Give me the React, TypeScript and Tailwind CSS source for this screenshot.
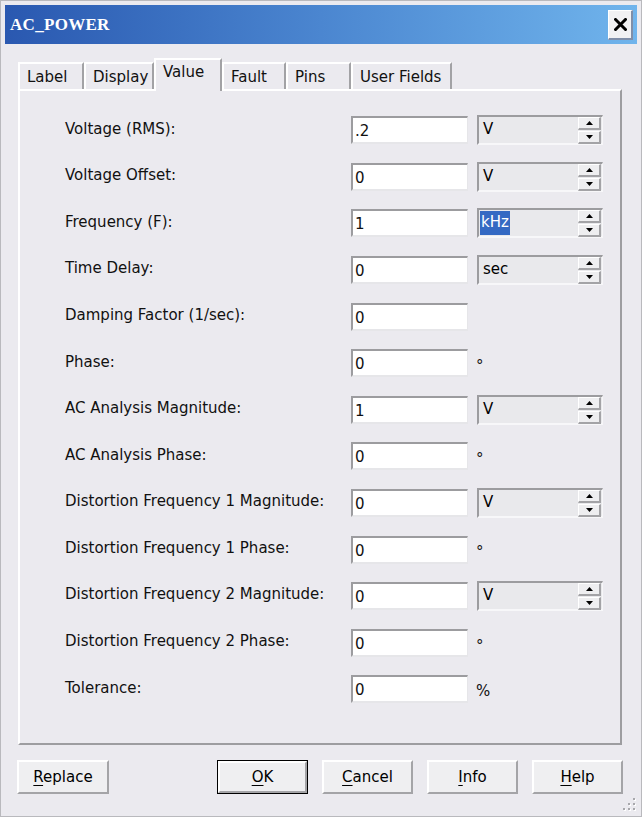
import React from 'react';

type Row = {
  label: string;
  value: string;
  unit?: string;
  selected?: boolean;
  suffix?: string;
};

const rows: Row[] = [
  { label: 'Voltage (RMS):', value: '.2', unit: 'V' },
  { label: 'Voltage Offset:', value: '0', unit: 'V' },
  { label: 'Frequency (F):', value: '1', unit: 'kHz', selected: true },
  { label: 'Time Delay:', value: '0', unit: 'sec' },
  { label: 'Damping Factor (1/sec):', value: '0' },
  { label: 'Phase:', value: '0', suffix: '°' },
  { label: 'AC Analysis Magnitude:', value: '1', unit: 'V' },
  { label: 'AC Analysis Phase:', value: '0', suffix: '°' },
  { label: 'Distortion Frequency 1 Magnitude:', value: '0', unit: 'V' },
  { label: 'Distortion Frequency 1 Phase:', value: '0', suffix: '°' },
  { label: 'Distortion Frequency 2 Magnitude:', value: '0', unit: 'V' },
  { label: 'Distortion Frequency 2 Phase:', value: '0', suffix: '°' },
  { label: 'Tolerance:', value: '0', suffix: '%' },
];

const tabs = [
  { name: 'Label', w: 'w-[66px]' },
  { name: 'Display', w: 'w-[70px]' },
  { name: 'Value', w: 'w-[68px]', active: true },
  { name: 'Fault', w: 'w-[64px]' },
  { name: 'Pins', w: 'w-[65px]' },
  { name: 'User Fields', w: 'w-[101px]' },
];

function SpinBtn({ up }: { up?: boolean }) {
  return (
    <div className="w-[23px] h-[13px] bg-[#eeeef0] border-t border-l border-t-white border-l-white border-r-[2px] border-b-[2px] border-r-[#a3a3a6] border-b-[#a3a3a6] flex items-center justify-center">
      <svg width="7" height="4" viewBox="0 0 7 4">
        {up ? <polygon points="3.5,0 7,4 0,4" fill="#000" /> : <polygon points="0,0 7,0 3.5,4" fill="#000" />}
      </svg>
    </div>
  );
}

function UnitBox({ unit, selected }: { unit: string; selected?: boolean }) {
  return (
    <div className="w-[126px] h-[30px] bg-[#e9e9ec] border-t-[2px] border-l-[2px] border-t-[#9c9c9f] border-l-[#9c9c9f] border-b-[2px] border-r border-b-[#f7f7f9] border-r-[#f7f7f9] flex items-start justify-between pl-[1px] pr-[1px]">
      <span
        className={`mt-[1px] h-[24px] leading-[22px] px-[1px] ${selected ? 'bg-[#3469c3] text-white' : 'text-black pl-[3px]'}`}
      >
        {unit}
      </span>
      <div className="flex flex-col gap-[1px]">
        <SpinBtn up />
        <SpinBtn />
      </div>
    </div>
  );
}

function DlgButton({ label, ul, def, w = 'w-[91px]' }: { label: string; ul: number; def?: boolean; w?: string }) {
  return (
    <div className={`${w} h-[34px] ${def ? 'border border-black' : ''}`}>
      <div className="w-full h-full bg-[#efeff1] border-t-[2px] border-l-[2px] border-t-white border-l-white border-r-[2px] border-b-[2px] border-r-[#a4a4a7] border-b-[#a4a4a7] flex items-center justify-center text-black">
        <span>
          {label.slice(0, ul)}
          <span className="underline underline-offset-[3px]">{label[ul]}</span>
          {label.slice(ul + 1)}
        </span>
      </div>
    </div>
  );
}

export default function App() {
  return (
    <div
      className="relative w-[642px] h-[817px] bg-[#ebeaef] border border-[#b9b9bd] pt-[4px] px-[4px] flex flex-col text-[15px] text-[#111]"
      style={{ fontFamily: '"DejaVu Sans", Verdana, sans-serif' }}
    >
      {/* Title bar */}
      <div className="h-[39px] bg-gradient-to-r from-[#2a58b0] via-[#4b86d0] to-[#70b4ec] flex items-center justify-between pl-[5px] pr-[4px]">
        <span
          className="text-white font-bold text-[17px] tracking-[0.3px]"
          style={{ fontFamily: '"Liberation Serif", "DejaVu Serif", serif' }}
        >
          AC_POWER
        </span>
        <div className="w-[25px] h-[30px] bg-[#f1f1f3] border-t border-l border-t-white border-l-white border-r-[2px] border-b-[2px] border-r-[#7f8ea8] border-b-[#7f8ea8] flex items-center justify-center">
          <svg width="13" height="13" viewBox="0 0 13 13">
            <path d="M1.5 1.5 L11.5 11.5 M11.5 1.5 L1.5 11.5" stroke="#000" strokeWidth="3" strokeLinecap="square" />
          </svg>
        </div>
      </div>

      {/* Tabs */}
      <div className="mt-[14px] ml-[13px] h-[31px] flex items-end">
        {tabs.map((t) => (
          <div
            key={t.name}
            className={`${t.w} ${t.active ? 'h-[33px] -mb-[2px] relative z-10 pt-[2px]' : 'h-[27px] pt-[3px]'} bg-[#ebeaef] border-t-[2px] border-l-[2px] border-t-white border-l-white border-r-[2px] border-r-[#a2a2a5] pl-[7px] leading-[20px] whitespace-nowrap`}
          >
            {t.name}
          </div>
        ))}
      </div>

      {/* Panel */}
      <div className="ml-[13px] w-[604px] h-[656px] border-t-[2px] border-l-[2px] border-t-white border-l-white border-r-[2px] border-b-[2px] border-r-[#9d9da0] border-b-[#9d9da0] pt-[16px] pl-[45px]">
        {rows.map((r) => (
          <div key={r.label} className="h-[46.6px] flex items-center">
            <div className="w-[286px] -mt-[3px]">{r.label}</div>
            <div className="w-[117px] h-[28px] bg-white border-t-[2px] border-l-[2px] border-t-[#9c9c9f] border-l-[#9c9c9f] border-b-[2px] border-r border-b-[#e6e6e9] border-r-[#e6e6e9] pl-[2px] pt-[3px] leading-[20px]">
              {r.value}
            </div>
            {r.unit && (
              <div className="ml-[9px]">
                <UnitBox unit={r.unit} selected={r.selected} />
              </div>
            )}
            {r.suffix === '°' && <div className="ml-[8px] mt-[6px]">°</div>}
            {r.suffix === '%' && <div className="ml-[8px] mt-[4px]">%</div>}
          </div>
        ))}
      </div>

      {/* Buttons */}
      <div className="mt-[15px] ml-[12px] w-[606px] flex items-start">
        <DlgButton label="Replace" ul={0} w="w-[92px]" />
        <div className="flex-1" />
        <div className="flex gap-[14px]">
          <DlgButton label="OK" ul={0} def />
          <DlgButton label="Cancel" ul={0} />
          <DlgButton label="Info" ul={0} />
          <DlgButton label="Help" ul={0} />
        </div>
      </div>

      {/* Resize grip */}
      <svg className="absolute right-[4px] bottom-[4px]" width="16" height="16" viewBox="0 0 16 16">
        {[
          [12, 2],
          [7, 7],
          [12, 7],
          [2, 12],
          [7, 12],
          [12, 12],
        ].map(([x, y]) => (
          <g key={`${x}-${y}`}>
            <rect x={x + 1} y={y + 1} width="2" height="2" fill="#ffffff" />
            <rect x={x} y={y} width="2" height="2" fill="#a8a8ac" />
          </g>
        ))}
      </svg>
    </div>
  );
}
